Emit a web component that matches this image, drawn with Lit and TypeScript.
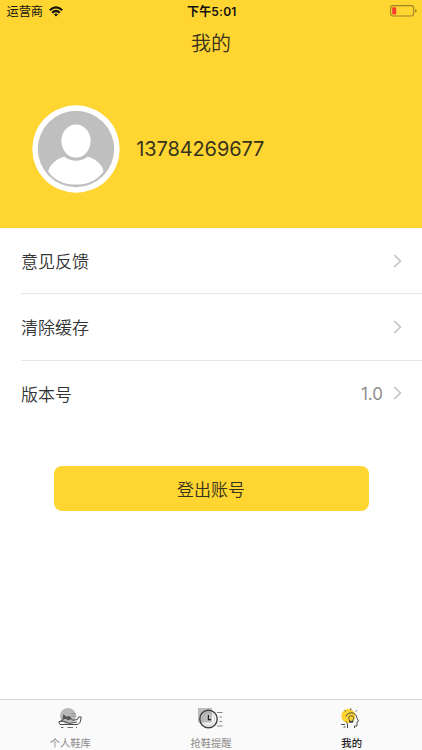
import { LitElement, html, css, svg } from "lit";
import { customElement } from "lit/decorators.js";

const wifi = svg`<svg class="wifi" viewBox="0 0 14 11" width="14" height="11"><g fill="none" stroke="#111" stroke-width="2.2"><path d="M.8 4.2Q7-1.4 13.2 4.2"/><path d="M3.2 6.7Q7 3.3 10.8 6.7"/></g><path fill="#111" d="M4.9 8.3Q7 6.6 9.1 8.3L7 10.6Z"/></svg>`;

const battery = svg`<svg class="battery" viewBox="0 0 27 12" width="27" height="12"><rect x=".6" y=".6" width="23" height="10.4" rx="2.4" fill="none" stroke="#9c8423" stroke-width="1.1"/><rect x="2.2" y="2.2" width="4" height="7.2" rx=".8" fill="#ff3b30"/><path d="M25 4q1.7.4 1.7 1.8T25 7.6z" fill="#9c8423"/></svg>`;

const avatar = svg`<svg class="avatar" viewBox="0 0 88 88" width="88" height="88"><circle cx="44" cy="44" r="43.7" fill="#fff"/><circle cx="44" cy="44" r="38.2" fill="#bfbfbf"/><path d="M32 51.8Q44 59.8 56 51.8C64 54 70.5 60 71.5 66.5C65 76 55 79.6 44 79.6S22.5 76 16.2 66.5C17.5 60 24 54 32 51.8Z" fill="#fff"/><ellipse cx="44" cy="36" rx="14.6" ry="16.5" fill="#fff"/></svg>`;

const chevron = svg`<svg class="chevron" viewBox="0 0 9 14" width="9" height="14"><path d="M1.2 1L7.4 7L1.2 13" fill="none" stroke="#c4c4c7" stroke-width="1.7"/></svg>`;

const shoeIcon = svg`<svg viewBox="0 0 26 22" width="26" height="22"><circle cx="11" cy="8" r="8" fill="#b9b9b9"/><g fill="none" stroke="#4c4c4c" stroke-width="1" stroke-linejoin="round"><path d="M6.5 7L9.500 9.200L12 8.500L16 12.300L20.500 11.500L21.500 9H24.300L23.300 14L21 16.500H3L1.800 14L6 12Z"/><path d="M1.800 13.600Q7 12.500 10 14.500T17 14.500L20 14"/><path d="M14 5.700H19M14 8H19.500" stroke-width=".8" stroke="#888"/></g><path d="M6 6.800L9.500 9.200L12.500 8.500L14.500 11.500L11 12L9 11L6 11Z" fill="#555"/><path d="M4 19.500H6.500M10.500 19.500H16M19 19.500H20" stroke="#707070" stroke-width="1"/></svg>`;

const clockIcon = svg`<svg viewBox="0 0 26 22" width="26" height="22"><path d="M0 0H14V14.5H0Z" fill="#bdbdbd"/><circle cx="10.5" cy="11" r="8.7" fill="none" stroke="#414141" stroke-width="1.4"/><circle cx="10.5" cy="11" r="6.3" fill="none" stroke="#999" stroke-width=".5"/><path d="M10.4 7V11.7H13" fill="none" stroke="#222" stroke-width="1.2"/><path d="M19 4.5H24.5M21.5 9H24M21.5 13.5H24M19 18H24.5" stroke="#858585" stroke-width="1"/></svg>`;

const ideaIcon = svg`<svg viewBox="0 0 26 22" width="26" height="22"><circle cx="9.3" cy="8" r="7" fill="#fed32d"/><g fill="none" stroke="#494949" stroke-width="1"><path d="M15.5 20V18H18V14L19.6 13L18 10.3C17.6 7 15.500 4.800 12.500 4.800C9.500 4.800 7.500 6.500 7 8.500M7 13.500C7.700 14.500 8.500 15.500 8.500 17V20"/><path d="M10.500 11.800C8.900 10 9.800 7.800 12.200 7.800S15.500 10 13.900 11.800V14.200H10.500Z" fill="#fed32d"/><path d="M10.500 13.500H14" stroke-width="1.3"/><path d="M11.800.3V2.200M5.500 2.200L6.800 3.500M18 2.200L16.700 3.500M2 16.500H6M4.500 19H6.500" stroke-width="1"/></g></svg>`;

@customElement("app-root")
export class AppRoot extends LitElement {
  static styles = css`
    :host {
      display: flex;
      flex-direction: column;
      width: 100%;
      height: 750px;
      background: #fff;
      color: #333;
      font-family: Inter, "Noto Sans CJK SC", sans-serif;
    }
    * { box-sizing: border-box; }
    svg { display: block; flex: none; }
    header { height: 228px; background: #fed531; flex: none; }
    .status {
      height: 22px;
      display: grid;
      grid-template-columns: 1fr auto 1fr;
      align-items: center;
      padding: 0 5px 0 6.5px;
      font-size: 12.2px;
      line-height: 22px;
      color: #111;
    }
    .carrier { display: flex; align-items: center; gap: 6px; padding-top: 1px; }
    .carrier .wifi { margin-top: -2px; }
    .time { font-weight: 600; font-size: 12px; letter-spacing: .2px; }
    .battery { justify-self: end; margin-top: -2px; }
    h1 { margin: 7px 0 0; font-size: 20px; line-height: 30px; font-weight: 350; text-align: center; color: #37321e; }
    .profile { display: flex; align-items: center; height: 88px; margin-top: 46px; padding-left: 31.7px; }
    .phone { margin-left: 16.500px; font-size: 20px; letter-spacing: -.1px; color: #37321e; }
    .row {
      display: flex;
      align-items: center;
      height: 66.3px;
      margin-left: 21px;
      padding-right: 20px;
      font-size: 17px;
      font-weight: 350;
      border-bottom: 1px solid #e6e6e6;
    }
    .row:last-child { border-color: transparent; }
    .value { margin-left: auto; margin-right: 10px; padding-top: 2px; font-weight: 400; color: #8e8e8e; }
    .row > .chevron:nth-child(2) { margin-left: auto; }
    .logout {
      display: block;
      width: 315px;
      height: 45px;
      margin: 39px 0 0 53.5px;
      padding: 3px 0 0;
      border: 0;
      border-radius: 8px;
      background: #fed531;
      color: #37321e;
      font: 350 17px/42px Inter, "Noto Sans CJK SC", sans-serif;
    }
    nav {
      display: grid;
      grid-template-columns: repeat(3, 1fr);
      height: 51px;
      margin-top: auto;
      border-top: 1px solid #d9d9d9;
      background: #fafafa;
    }
    .tab { display: flex; flex-direction: column; align-items: center; padding-top: 8px; font-size: 10.3px; line-height: 14px; color: #8c8c8c; }
    .tab span { margin-top: 6px; }
    .active { color: #222; font-weight: 500; }
  `;

  render() {
    return html`
      <header>
        <div class="status">
          <div class="carrier"><span>运营商</span>${wifi}</div>
          <span class="time">下午5:01</span>${battery}
        </div>
        <h1>我的</h1>
        <div class="profile">${avatar}<span class="phone">13784269677</span></div>
      </header>
      <main>
        <div class="row"><span>意见反馈</span>${chevron}</div>
        <div class="row"><span>清除缓存</span>${chevron}</div>
        <div class="row"><span>版本号</span><span class="value">1.0</span>${chevron}</div>
      </main>
      <button class="logout">登出账号</button>
      <nav>
        <div class="tab">${shoeIcon}<span>个人鞋库</span></div>
        <div class="tab">${clockIcon}<span>抢鞋提醒</span></div>
        <div class="tab active">${ideaIcon}<span>我的</span></div>
      </nav>
    `;
  }
}
